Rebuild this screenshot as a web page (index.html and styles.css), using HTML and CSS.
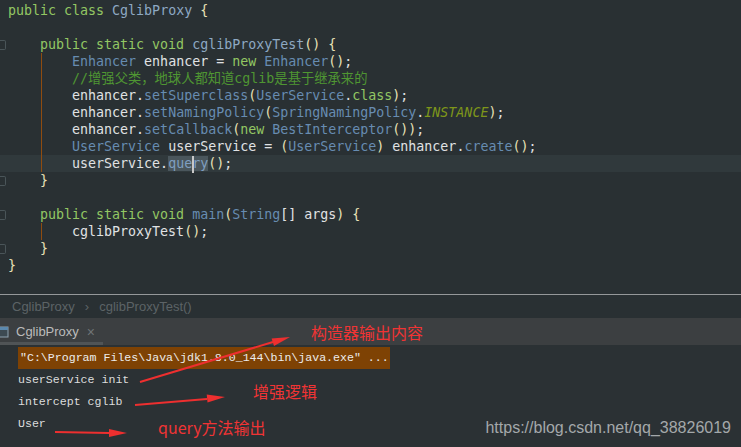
FILE: index.html
```html
<!DOCTYPE html>
<html>

<head>
    <title>CglibProxy</title>
    <link rel="stylesheet" href="styles.css">
</head>

<body>
    <div class="editor">
        <div class="line"><span class="gut"></span><span class="k">public class</span> <span class="d">CglibProxy</span> <span class="p">{</span></div>
        <div class="line"><span class="gut"></span></div>
        <div class="line"><span class="gut"><i class="fold"></i></span>    <span class="k">public static void</span> <span class="d">cglibProxyTest</span><span class="p">()</span> <span class="p">{</span></div>
        <div class="block">
            <div class="line"><span class="gut"></span>        <span class="t">Enhancer</span> <span class="v">enhancer</span> = <span class="k">new</span> <span class="t">Enhancer</span><span class="p">()</span>;</div>
            <div class="line"><span class="gut"></span>        <span class="c">//增强父类，地球人都知道cglib是基于继承来的</span></div>
            <div class="line"><span class="gut"></span>        <span class="v">enhancer</span>.<span class="t">setSuperclass</span><span class="p">(</span><span class="t">UserService</span>.<span class="k">class</span><span class="p">)</span>;</div>
            <div class="line"><span class="gut"></span>        <span class="v">enhancer</span>.<span class="t">setNamingPolicy</span><span class="p">(</span><span class="t">SpringNamingPolicy</span>.<span class="s">INSTANCE</span><span class="p">)</span>;</div>
            <div class="line"><span class="gut"></span>        <span class="v">enhancer</span>.<span class="t">setCallback</span><span class="p">(</span><span class="k">new</span> <span class="t">BestInterceptor</span><span class="p">())</span>;</div>
            <div class="line"><span class="gut"></span>        <span class="t">UserService</span> <span class="v">userService</span> = <span class="p">(</span><span class="t">UserService</span><span class="p">)</span> <span class="v">enhancer</span>.<span class="t">create</span><span class="p">()</span>;</div>
            <div class="line current"><span class="gut"></span>        <span class="v">userService</span>.<span class="t sel">que<b class="caret"></b>ry</span><span class="p">()</span>;</div>
        </div>
        <div class="line"><span class="gut"><i class="fold"></i></span>    <span class="p">}</span></div>
        <div class="line"><span class="gut"></span></div>
        <div class="line"><span class="gut"><i class="fold"></i></span>    <span class="k">public static void</span> <span class="t">main</span><span class="p">(</span><span class="t">String</span>[] <span class="v">args</span><span class="p">)</span> <span class="p">{</span></div>
        <div class="block">
            <div class="line"><span class="gut"></span>        <span class="v">cglibProxyTest</span><span class="p">()</span>;</div>
        </div>
        <div class="line"><span class="gut"><i class="fold"></i></span>    <span class="p">}</span></div>
        <div class="line"><span class="gut"></span><span class="p">}</span></div>
    </div>

    <div class="crumbs">
        <span>CglibProxy</span>
        <span class="sep">›</span>
        <span>cglibProxyTest()</span>
    </div>

    <div class="tabs">
        <div class="tab">
            <svg class="tab-icon" width="9" height="12" viewBox="0 0 9 12">
                <rect x="-4" y="1" width="12" height="10" fill="#3d4a52" stroke="#8ea2b0" stroke-width="1"/>
                <rect x="-4" y="1" width="12" height="3" fill="#5b88ad"/>
            </svg>
            <span class="tab-name">CglibProxy</span>
            <span class="tab-close">×</span>
        </div>
    </div>

    <div class="console">
        <div class="out"><span class="cmd">"C:\Program Files\Java\jdk1.8.0_144\bin\java.exe" ...</span></div>
        <div class="out">userService init</div>
        <div class="out">intercept cglib</div>
        <div class="out">User</div>
    </div>

    <svg class="notes" width="741" height="447" viewBox="0 0 741 447">
        <g stroke="#ee2f2f" stroke-width="2" fill="none">
            <line x1="140" y1="382" x2="273" y2="342"/>
            <line x1="135" y1="405" x2="207" y2="399"/>
            <line x1="55" y1="432" x2="109" y2="433"/>
        </g>
        <g fill="#ee2f2f">
            <polygon points="290,337 274,346 271.6,338.4"/>
            <polygon points="225,397 207.5,402.6 206.7,394.6"/>
            <polygon points="127,433 109,437 109,429"/>
        </g>
        <g class="note-text">
            <text x="311" y="339">构造器输出内容</text>
            <text x="253" y="398">增强逻辑</text>
            <text x="158" y="434">query方法输出</text>
        </g>
    </svg>

    <div class="mark">https://blog.csdn.net/qq_38826019</div>
</body>

</html>
```

FILE: styles.css
```css
body {
    margin: 0;
    width: 741px;
    height: 447px;
    overflow: hidden;
    position: relative;
    background-color: #293033;
}

.editor {
    height: 292px;
    padding-top: 2px;
    border-bottom: 1px solid #95989a;
    font-family: "DejaVu Sans Mono", "Noto Sans CJK SC", monospace;
    font-size: 13.3px;
    color: #e0e2e4;
}

.line {
    height: 17px;
    line-height: 17px;
    white-space: pre;
}

.line.current {
    background-color: #30393c;
}

.gut {
    display: inline-block;
    width: 8px;
    height: 17px;
    vertical-align: top;
}

.fold {
    display: block;
    width: 5px;
    height: 8px;
    margin-top: 4px;
    border: 1px solid #4a5559;
    border-left: none;
    border-radius: 0 2px 2px 0;
}

.block {
    position: relative;
}

.block::before {
    content: "";
    position: absolute;
    left: 41px;
    top: 0;
    bottom: 0;
    width: 1px;
    background-color: #8f4c10;
}

.k {
    color: #93c763;
}

.d {
    color: #8ea9c3;
}

.t {
    color: #678cb1;
}

.v {
    color: #e0e2e4;
}

.p {
    color: #e8e2b7;
}

.c {
    color: #4f9632;
}

.s {
    color: #7e961a;
    font-style: italic;
}

.sel {
    position: relative;
    background-color: #4a565c;
    color: #7f9fc0;
}

.caret {
    position: absolute;
    left: 24px;
    top: 0;
    width: 2px;
    height: 17px;
    background-color: #c8c8c8;
}

.crumbs {
    height: 23px;
    display: flex;
    align-items: center;
    gap: 10px;
    padding-left: 12px;
    font-family: "Liberation Sans", sans-serif;
    font-size: 13px;
    color: #5c6366;
}

.tabs {
    height: 27px;
    background-color: #3c3f41;
    display: flex;
}

.tab {
    display: flex;
    align-items: center;
    width: 103px;
    box-sizing: border-box;
    border-bottom: 3px solid #505456;
    font-family: "Liberation Sans", sans-serif;
    font-size: 13px;
    padding-top: 3px;
}

.tab-icon {
    margin-right: 7px;
}

.tab-name {
    color: #bbbbbb;
}

.tab-close {
    margin-left: 8px;
    color: #6f7476;
    font-size: 14px;
}

.console {
    padding-top: 2px;
    background-color: #2b3134;
    height: 100px;
    font-family: "Liberation Mono", monospace;
    font-size: 11.6px;
    color: #dcdcdc;
}

.out {
    height: 22px;
    line-height: 22px;
    padding-left: 18px;
    white-space: pre;
}

.cmd {
    display: inline-block;
    background-color: #7e4204;
    padding: 0 1px 0 2px;
    color: #ececec;
}

.notes {
    position: absolute;
    left: 0;
    top: 0;
}

.note-text {
    fill: #f03434;
    font-family: "Noto Sans CJK SC", sans-serif;
    font-size: 16px;
}

.mark {
    position: absolute;
    right: 10px;
    bottom: 10px;
    font-family: "Liberation Sans", sans-serif;
    font-size: 16px;
    color: #a4a8aa;
}
```
